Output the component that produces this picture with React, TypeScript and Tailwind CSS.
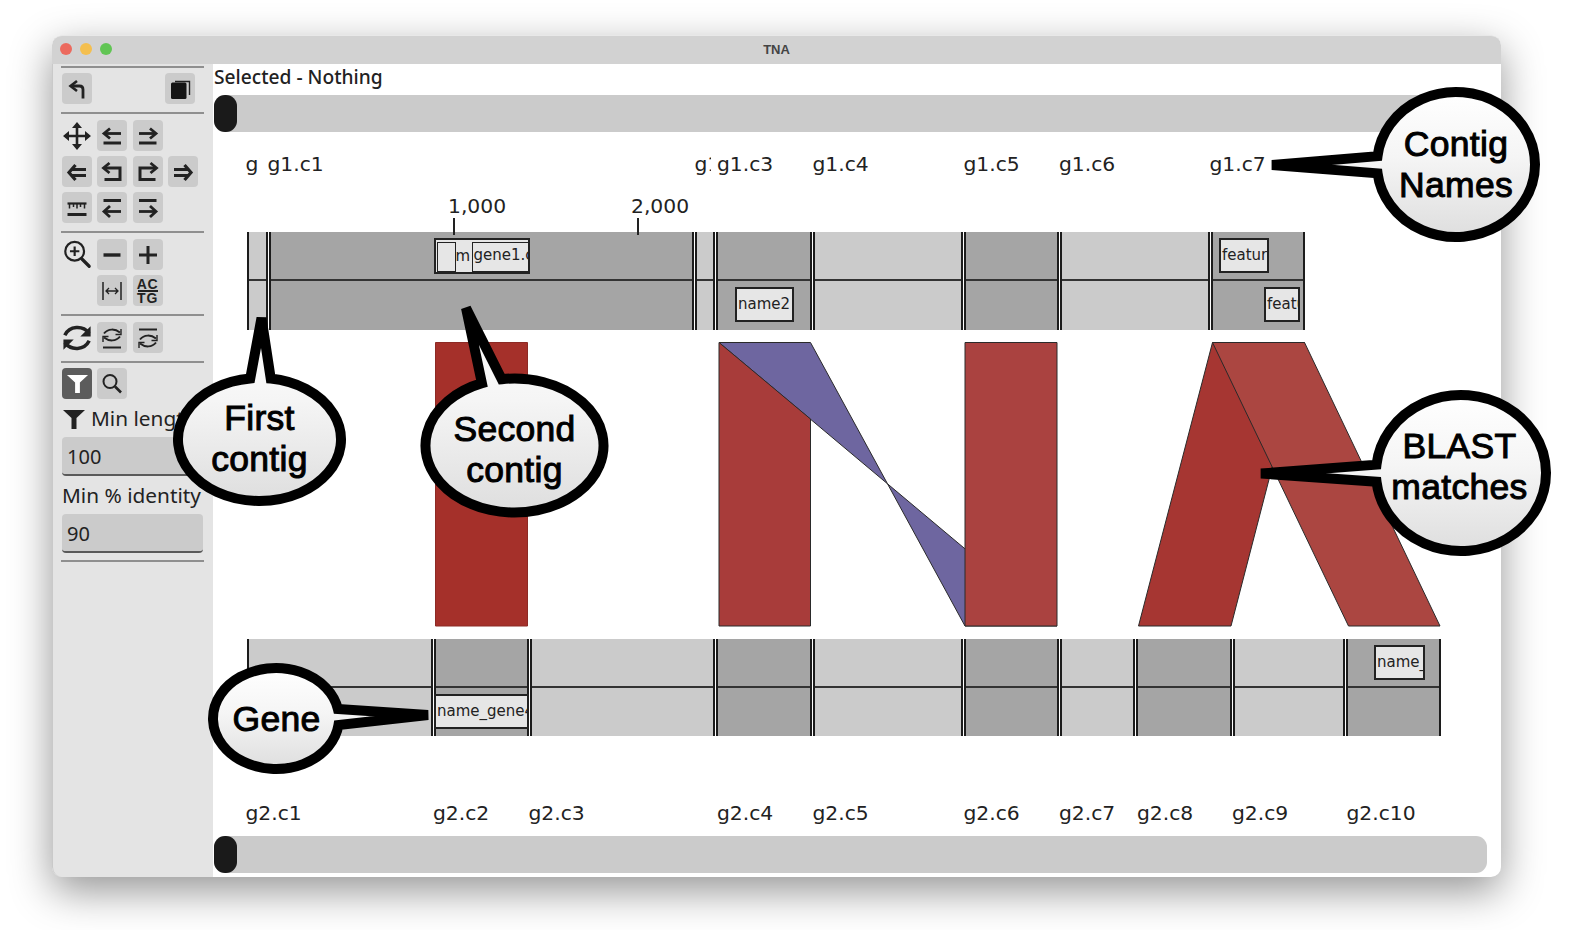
import React from 'react';

const ink = '#222222';

// contig start positions in page px, the last entry is the end of the track
const track1 = [246.5, 268.5, 695, 716, 813, 963.5, 1060, 1210.5, 1306];
const track2 = [246.5, 433.5, 529.5, 716, 813, 963.5, 1060, 1136, 1232.5, 1346, 1441.5];
const labels1 = [245.5, 267.5, 694.5, 717, 812.5, 963.5, 1059, 1209.5, 1310];
const labels2 = [245.5, 433, 528.5, 717, 812.5, 963.5, 1059, 1137, 1232, 1346.5, 1441];
const names1 = ['g1.c0', 'g1.c1', 'g1.c2', 'g1.c3', 'g1.c4', 'g1.c5', 'g1.c6', 'g1.c7'];
const names2 = ['g2.c1', 'g2.c2', 'g2.c3', 'g2.c4', 'g2.c5', 'g2.c6', 'g2.c7', 'g2.c8', 'g2.c9', 'g2.c10'];
const shade1 = [0, 1, 0, 1, 0, 1, 0, 1];
const shade2 = [0, 1, 0, 1, 0, 1, 0, 1, 0, 1];

interface Gene {
  label: string;
  left: number;
  right: number;
  top: number;
  bottom: number;
}

const genes1: Gene[] = [
  { label: 'name2', left: 735, right: 794, top: 287, bottom: 322 },
  { label: 'feature', left: 1219, right: 1269, top: 238, bottom: 273 },
  { label: 'feature', left: 1264, right: 1300, top: 287, bottom: 322 },
];
const genes2: Gene[] = [
  { label: 'name_gene4', left: 434, right: 529, top: 694, bottom: 729 },
  { label: 'name_gene', left: 1374, right: 1425, top: 645, bottom: 680 },
];

const Svg: React.FC<{ size?: number; children: React.ReactNode }> = ({ size = 30, children }) => (
  <svg width={size} height={size} viewBox={`0 0 ${size} ${size}`} fill="none" stroke={ink} strokeWidth="2.8">
    {children}
  </svg>
);

const ArrowBar = ({ flip }: { flip?: boolean }) => (
  <Svg>
    <g transform={flip ? 'matrix(-1 0 0 1 30 0)' : undefined}>
      <path d="M8 12.500h16" />
      <path d="M13 7.500l-6 5 6 5" />
      <path d="M6.500 22h17.500" strokeWidth="3" />
    </g>
  </Svg>
);

const BarArrow = ({ flip }: { flip?: boolean }) => (
  <Svg>
    <g transform={flip ? 'matrix(-1 0 0 1 30 0)' : undefined}>
      <path d="M6.500 7.500h17.500" strokeWidth="3" />
      <path d="M8 18.500h16" />
      <path d="M13 13l-6 5.500 6 5.500" />
    </g>
  </Svg>
);

const DoubleArrow = ({ flip }: { flip?: boolean }) => (
  <Svg>
    <g transform={flip ? 'matrix(-1 0 0 1 30 0)' : undefined}>
      <path d="M9 12.500h15M9 18.500h15" strokeWidth="3" />
      <path d="M13.500 8l-6.500 7.500 6.500 7.500" strokeWidth="3.200" />
    </g>
  </Svg>
);

const TurnArrow = ({ flip }: { flip?: boolean }) => (
  <Svg>
    <g transform={flip ? 'matrix(-1 0 0 1 30 0)' : undefined}>
      <path d="M8 11h15v11.500H7.500" strokeWidth="3" />
      <path d="M12.500 6l-6 5 6 5" strokeWidth="2.800" />
    </g>
  </Svg>
);

const Undo = () => (
  <Svg>
    <path d="M21 24.500v-9c0-2.500-1-3.500-3.500-3.500H10" strokeWidth="2.800" />
    <path d="M15 7l-6.500 5 6.500 5" strokeWidth="2.600" />
  </Svg>
);

const Copy = () => (
  <Svg>
    <path d="M10 7.500h14.500v13.500" strokeWidth="1.400" />
    <rect x="6" y="8.500" width="15.500" height="16.500" rx="1.500" fill="#141414" stroke="none" />
  </Svg>
);

const MoveIcon = () => (
  <svg width="30" height="30" viewBox="0 0 30 30" fill="#222222" stroke="#222222" strokeWidth="2.600">
    <path d="M15 4v22M3 15h24" />
    <path d="M15 1l-5 6h10zM15 29l-5-6h10zM1 15l6-5v10zM29 15l-6-5v10z" stroke="none" />
  </svg>
);

const Ruler = () => (
  <Svg>
    <path d="M5.500 10.500h19" strokeWidth="2.200" />
    <path d="M7.500 10v5.500M11.500 10v4M15 10v5.500M18.500 10v4M22.500 10v5.500" strokeWidth="1.500" />
    <path d="M5.500 21.500h19" strokeWidth="3" />
  </Svg>
);

const ZoomIcon = () => (
  <svg width="32" height="32" viewBox="0 0 32 32" fill="none" stroke="#222222" strokeWidth="2.300">
    <circle cx="13.500" cy="12" r="10" />
    <path d="M13.500 7v10M8.500 12h10" />
    <path d="M21 20l8 8" strokeWidth="3.400" strokeLinecap="round" />
  </svg>
);

const Fit = () => (
  <Svg>
    <path d="M6 6v18M24 6v18" strokeWidth="1.500" />
    <path d="M9 15h12M12 12l-3 3 3 3M18 12l3 3-3 3" strokeWidth="1.300" />
  </Svg>
);

const Sync = ({ big, bar }: { big?: boolean; bar?: 'top' | 'bottom' }) => {
  if (big) {
    return (
      <svg width="32" height="32" viewBox="0 0 32 32" fill="none" stroke="#222222" strokeWidth="3.800">
        <path d="M3 13C8 3 22 2 29 11" />
        <path d="M29 19C24 29 10 30 3 21" />
        <path d="M30.500 3.500v11h-11z" fill="#222222" stroke="none" />
        <path d="M1.500 28.500v-11h11z" fill="#222222" stroke="none" />
      </svg>
    );
  }
  return (
    <Svg>
      {bar === 'bottom' ? <path d="M6 24.500h18" strokeWidth="2" /> : <path d="M6 6.500h18" strokeWidth="2" />}
      <g transform={bar === 'bottom' ? 'translate(0 -2.500)' : 'translate(0 3.500)'}>
        <path d="M7 13c4-5 11-5 16-1M23 16c-4 5-11 5-16 1" strokeWidth="2" />
        <path d="M24 8.500v5.500h-5.500M6 21.500v-5.500h5.500" strokeWidth="1.400" />
      </g>
    </Svg>
  );
};

const Funnel = ({ color, size }: { color: string; size: number }) => (
  <svg width={size} height={size} viewBox="0 0 24 24" fill={color}>
    <path d="M1 3h22l-8.500 8v11h-5V11z" />
  </svg>
);

const SearchIcon = () => (
  <Svg>
    <circle cx="13" cy="12.500" r="6.500" strokeWidth="2" />
    <path d="M18 17.500l6 6" strokeWidth="2.600" />
  </Svg>
);

const ToolButton: React.FC<{ active?: boolean; bare?: boolean; children: React.ReactNode }> = ({
  active,
  bare,
  children,
}) => (
  <button
    className={
      bare
        ? 'w-[30px] h-[31px] flex items-center justify-center'
        : active
          ? 'w-[30px] h-[31px] rounded-[4px] bg-[#5c5c5c] flex items-center justify-center'
          : 'w-[30px] h-[31px] rounded-[4px] bg-[#cbcbcb] flex items-center justify-center'
    }
  >
    {children}
  </button>
);

const Divider = ({ className }: { className: string }) => (
  <div className={`w-[143px] -ml-px h-[2px] shrink-0 bg-[#8f8f8f] ${className}`} />
);

const Field = ({ value }: { value: string }) => (
  <div className="w-[141px] h-[39px] shrink-0 rounded-[4px] bg-[#cbcbcb] border-b-[2px] border-[#5a5a5a] flex items-center pl-[5px] pt-[2px] text-[20px] text-[#222222]">
    {value}
  </div>
);

const Sidebar = () => (
  <aside className="w-[161px] shrink-0 bg-[#e4e4e4] pl-[9px] flex flex-col border-l border-[#c9c9c9] rounded-bl-[10px]">
    <Divider className="mt-[2px]" />
    <div className="mt-[5px] w-[133px] flex justify-between">
      <ToolButton><Undo /></ToolButton>
      <ToolButton><Copy /></ToolButton>
    </div>
    <Divider className="mt-[8px]" />
    <div className="mt-[6px] grid grid-cols-[repeat(4,30px)] gap-x-[5.300px] gap-y-[5px]">
      <ToolButton bare><MoveIcon /></ToolButton>
      <ToolButton><ArrowBar /></ToolButton>
      <ToolButton><ArrowBar flip /></ToolButton>
      <div />
      <ToolButton><DoubleArrow /></ToolButton>
      <ToolButton><TurnArrow /></ToolButton>
      <ToolButton><TurnArrow flip /></ToolButton>
      <ToolButton><DoubleArrow flip /></ToolButton>
      <ToolButton><Ruler /></ToolButton>
      <ToolButton><BarArrow /></ToolButton>
      <ToolButton><BarArrow flip /></ToolButton>
    </div>
    <Divider className="mt-[8px]" />
    <div className="mt-[6px] grid grid-cols-[repeat(4,30px)] gap-x-[5.300px] gap-y-[5px]">
      <ToolButton bare><ZoomIcon /></ToolButton>
      <ToolButton>
        <Svg><path d="M6.500 15h17" strokeWidth="3.400" /></Svg>
      </ToolButton>
      <ToolButton>
        <Svg><path d="M6 15h18M15 6v18" strokeWidth="3" /></Svg>
      </ToolButton>
      <div />
      <div />
      <ToolButton><Fit /></ToolButton>
      <ToolButton>
        <span className="flex flex-col items-center font-['Liberation_Sans',sans-serif] font-bold text-[14px] leading-[10px] tracking-[0.8px] text-[#222222]">
          <span>AC</span>
          <span className="w-[20px] h-[2px] bg-[#222222] my-[1px]" />
          <span>TG</span>
        </span>
      </ToolButton>
    </div>
    <Divider className="mt-[8px]" />
    <div className="mt-[6px] grid grid-cols-[repeat(4,30px)] gap-x-[5.300px]">
      <ToolButton bare><Sync big /></ToolButton>
      <ToolButton><Sync bar="bottom" /></ToolButton>
      <ToolButton><Sync bar="top" /></ToolButton>
    </div>
    <Divider className="mt-[8px]" />
    <div className="mt-[5px] flex gap-[5.300px]">
      <ToolButton active><Funnel color="#ffffff" size={23} /></ToolButton>
      <ToolButton><SearchIcon /></ToolButton>
    </div>
    <div className="mt-[8px] h-[24px] flex items-center gap-[5px] text-[20.800px] text-[#222222] whitespace-nowrap">
      <Funnel color="#222222" size={24} />
      Min length
    </div>
    <div className="mt-[6px]"><Field value="100" /></div>
    <div className="mt-[8px] h-[24px] flex items-center text-[20.800px] text-[#222222] whitespace-nowrap">Min % identity</div>
    <div className="mt-[6px]"><Field value="90" /></div>
    <Divider className="mt-[7px]" />
  </aside>
);

const ScrollBar = ({ className }: { className: string }) => (
  <div className={`h-[37px] ml-px mr-[14px] shrink-0 rounded-[11px] bg-[#cbcbcb] ${className}`}>
    <div className="w-[23px] h-[37px] rounded-[11px] bg-[#1a1a1a]" />
  </div>
);

const LabelRow = ({
  starts,
  names,
  clips,
  className,
}: {
  starts: number[];
  names: string[];
  clips: Record<number, number>;
  className: string;
}) => (
  <div className={`flex pl-[32.500px] shrink-0 h-[26px] items-center font-['DejaVu_Sans',sans-serif] text-[20.300px] text-[#222222] ${className}`}>
    {names.map((name, i) => (
      <div key={name} style={{ width: starts[i + 1] - starts[i] }}>
        <div className="overflow-hidden whitespace-nowrap" style={{ maxWidth: clips[i] }}>
          {name}
        </div>
      </div>
    ))}
  </div>
);

const GeneBox = ({ gene, trackLeft, trackTop }: { gene: Gene; trackLeft: number; trackTop: number }) => (
  <div
    className="absolute border-[2px] border-[#222222] bg-[#e6e6e6] overflow-hidden whitespace-nowrap flex items-center pl-px text-[15px] text-[#222222]"
    style={{ left: gene.left - trackLeft, top: gene.top - trackTop, width: gene.right - gene.left, height: gene.bottom - gene.top }}
  >
    {gene.label}
  </div>
);

const Track: React.FC<{ starts: number[]; shades: number[]; genes: Gene[]; top: number; children?: React.ReactNode }> = ({
  starts,
  shades,
  genes,
  top,
  children,
}) => (
  <div className="relative ml-[33.500px] h-[97.500px] shrink-0 flex font-['DejaVu_Sans',sans-serif]">
    {shades.map((shade, i) => (
      <div key={i} className="h-full" style={{ width: starts[i + 1] - starts[i] }}>
        <div className={shade ? 'h-full mr-px border-x-2 border-[#1c1c1c] bg-[#a5a5a5]' : 'h-full mr-px border-x-2 border-[#1c1c1c] bg-[#cbcbcb]'}>
          <div className="h-[49px] border-b-2 border-[#333333]" />
        </div>
      </div>
    ))}
    {genes.map((gene, i) => (
      <GeneBox key={i} gene={gene} trackLeft={starts[0]} trackTop={top} />
    ))}
    {children}
  </div>
);

// the overlapping gene cluster on the second contig of the first genome
const GeneCluster = () => (
  <div className="absolute left-[187px] top-[6px] w-[96px] h-[36px] border-[2px] border-[#222222] bg-[#e6e6e6] overflow-hidden whitespace-nowrap text-[15px] text-[#222222]">
    <div className="absolute left-[1px] top-[2px] w-[19px] h-[30px] border-[1.500px] border-[#222222] bg-[#e6e6e6]" />
    <div className="absolute left-[20px] top-[2px] leading-[28px]">m</div>
    <div className="absolute left-[36px] top-[2px] w-[60px] h-[30px] border-[1.500px] border-r-0 border-[#222222] bg-[#e6e6e6] pl-[1px] leading-[25px]">gene1.c</div>
  </div>
);

const RulerMarks = () => (
  <div className="relative h-[55px] shrink-0 font-['DejaVu_Sans',sans-serif] text-[20.300px] leading-[26px] text-[#222222]">
    <div className="absolute left-[235px] top-[16px]">1,000</div>
    <div className="absolute left-[240px] top-[41px] w-[2px] h-[17px] bg-[#222222] z-10" />
    <div className="absolute left-[418px] top-[16px]">2,000</div>
    <div className="absolute left-[424px] top-[41px] w-[2px] h-[17px] bg-[#222222] z-10" />
  </div>
);

const Ribbons = () => (
  <svg className="block shrink-0" width="1287" height="309" viewBox="213 329.5 1287 309" stroke="#2a2a2a" strokeWidth="1">
    <polygon points="435.500,342 527.500,342 527.500,625.500 435.500,625.500" fill="#a5302a" stroke="#8c2a25" />
    <polygon points="719,342 810.500,342 887.500,483.300" fill="#6e66a0" />
    <polygon points="887.500,483.300 1057,625.500 965,625.500" fill="#6e66a0" />
    <polygon points="719,342 810.500,418.500 810.500,625.500 719,625.500" fill="#a83c3a" />
    <polygon points="965,342 1057,342 1057,625.500 965,625.500" fill="#aa4240" />
    <polygon points="1212.500,342 1304.500,342 1231,625.500 1138.500,625.500" fill="#a63632" />
    <polygon points="1212.500,342 1304.500,342 1440,625.500 1348.500,625.500" fill="#ab4641" />
  </svg>
);

interface BubbleProps {
  cx: number;
  cy: number;
  rx: number;
  ry: number;
  tipX: number;
  tipY: number;
  base: number;
}

const Bubble = ({ cx, cy, rx, ry, tipX, tipY, base }: BubbleProps) => {
  const theta = Math.atan2((tipY - cy) / ry, (tipX - cx) / rx);
  const delta = base / ((rx + ry) / 2);
  const a = [cx + rx * Math.cos(theta + delta), cy + ry * Math.sin(theta + delta)];
  const b = [cx + rx * Math.cos(theta - delta), cy + ry * Math.sin(theta - delta)];
  return (
    <path
      d={`M${a[0]} ${a[1]}A${rx} ${ry} 0 1 1 ${b[0]} ${b[1]}L${tipX} ${tipY}Z`}
      fill="url(#bubbleFill)"
      stroke="#000000"
      strokeWidth="10"
      strokeLinejoin="miter"
      strokeMiterlimit="3"
    />
  );
};

const bubbles: (BubbleProps & { lines: string[]; textX: number; textY: number })[] = [
  { cx: 1456, cy: 164.5, rx: 79, ry: 72.5, tipX: 1272, tipY: 165, base: 9, lines: ['Contig', 'Names'], textX: 1456, textY: 164.5 },
  { cx: 1461, cy: 473, rx: 85, ry: 78, tipX: 1261, tipY: 473.5, base: 9, lines: ['BLAST', 'matches'], textX: 1459.5, textY: 466.5 },
  { cx: 259.5, cy: 439.5, rx: 81.5, ry: 61.5, tipX: 261.5, tipY: 318, base: 9, lines: ['First', 'contig'], textX: 259.5, textY: 438.5 },
  { cx: 514.5, cy: 445.5, rx: 89, ry: 67, tipX: 466, tipY: 308, base: 9, lines: ['Second', 'contig'], textX: 514.5, textY: 450 },
  { cx: 276, cy: 718.5, rx: 63, ry: 50.5, tipX: 428, tipY: 715, base: 9, lines: ['Gene'], textX: 276.5, textY: 719 },
];

const Callouts = () => (
  <>
    <svg className="absolute left-0 top-0 z-20 pointer-events-none" width="1572" height="930">
      <defs>
        <linearGradient id="bubbleFill" x1="0" y1="0" x2="0" y2="1">
          <stop offset="0" stopColor="#ffffff" />
          <stop offset="0.45" stopColor="#f5f5f5" />
          <stop offset="1" stopColor="#dedede" />
        </linearGradient>
      </defs>
      {bubbles.map((bubble) => (
        <Bubble key={bubble.lines[0] + bubble.cx} {...bubble} />
      ))}
    </svg>
    {bubbles.map((bubble) => (
      <div
        key={bubble.lines[0] + bubble.cx}
        className="absolute z-30 -translate-x-1/2 -translate-y-1/2 text-center font-['Liberation_Sans',sans-serif] text-[35.500px] leading-[41px] tracking-[0.3px] text-black whitespace-nowrap [-webkit-text-stroke:1px_black]"
        style={{ left: bubble.textX, top: bubble.textY }}
      >
        {bubble.lines.map((line) => (
          <div key={line}>{line}</div>
        ))}
      </div>
    ))}
  </>
);

const App = () => {
  return (
    <div className="relative w-[1572px] h-[930px] overflow-hidden bg-white pl-[52px] pt-[35px] font-['Noto_Sans',sans-serif]">
      <div className="w-[1449px] h-[842px] flex flex-col rounded-[10px] bg-white shadow-[0_14px_42px_rgba(0,0,0,0.42)]">
        <header className="relative h-[29px] shrink-0 rounded-t-[10px] bg-[#d2d2d2] border-t border-[#e8e8e8] flex items-center justify-center">
          <div className="absolute left-[8px] top-[7px] flex gap-[8px]">
            <span className="w-[12px] h-[12px] rounded-full bg-[#ec6a5e]" />
            <span className="w-[12px] h-[12px] rounded-full bg-[#f4bf4f]" />
            <span className="w-[12px] h-[12px] rounded-full bg-[#61c554]" />
          </div>
          <span className="font-['Liberation_Sans',sans-serif] font-bold text-[13px] text-[#444444]">TNA</span>
        </header>
        <div className="flex-1 flex min-h-0">
          <Sidebar />
          <main className="flex-1 flex flex-col min-w-0">
            <div className="h-[31px] shrink-0 pl-px leading-[26px] text-[19.200px] font-medium text-[#222222]">Selected - Nothing</div>
            <ScrollBar className="" />
            <LabelRow starts={labels1} names={names1} clips={{ 0: 14.5, 2: 16.5 }} className="mt-[19px]" />
            <RulerMarks />
            <Track starts={track1} shades={shade1} genes={genes1} top={232}>
              <GeneCluster />
            </Track>
            <Ribbons />
            <Track starts={track2} shades={shade2} genes={genes2} top={638.5} />
            <LabelRow starts={labels2} names={names2} clips={{}} className="mt-[64px]" />
            <ScrollBar className="mt-[10px]" />
          </main>
        </div>
      </div>
      <Callouts />
    </div>
  );
};

export default App;
